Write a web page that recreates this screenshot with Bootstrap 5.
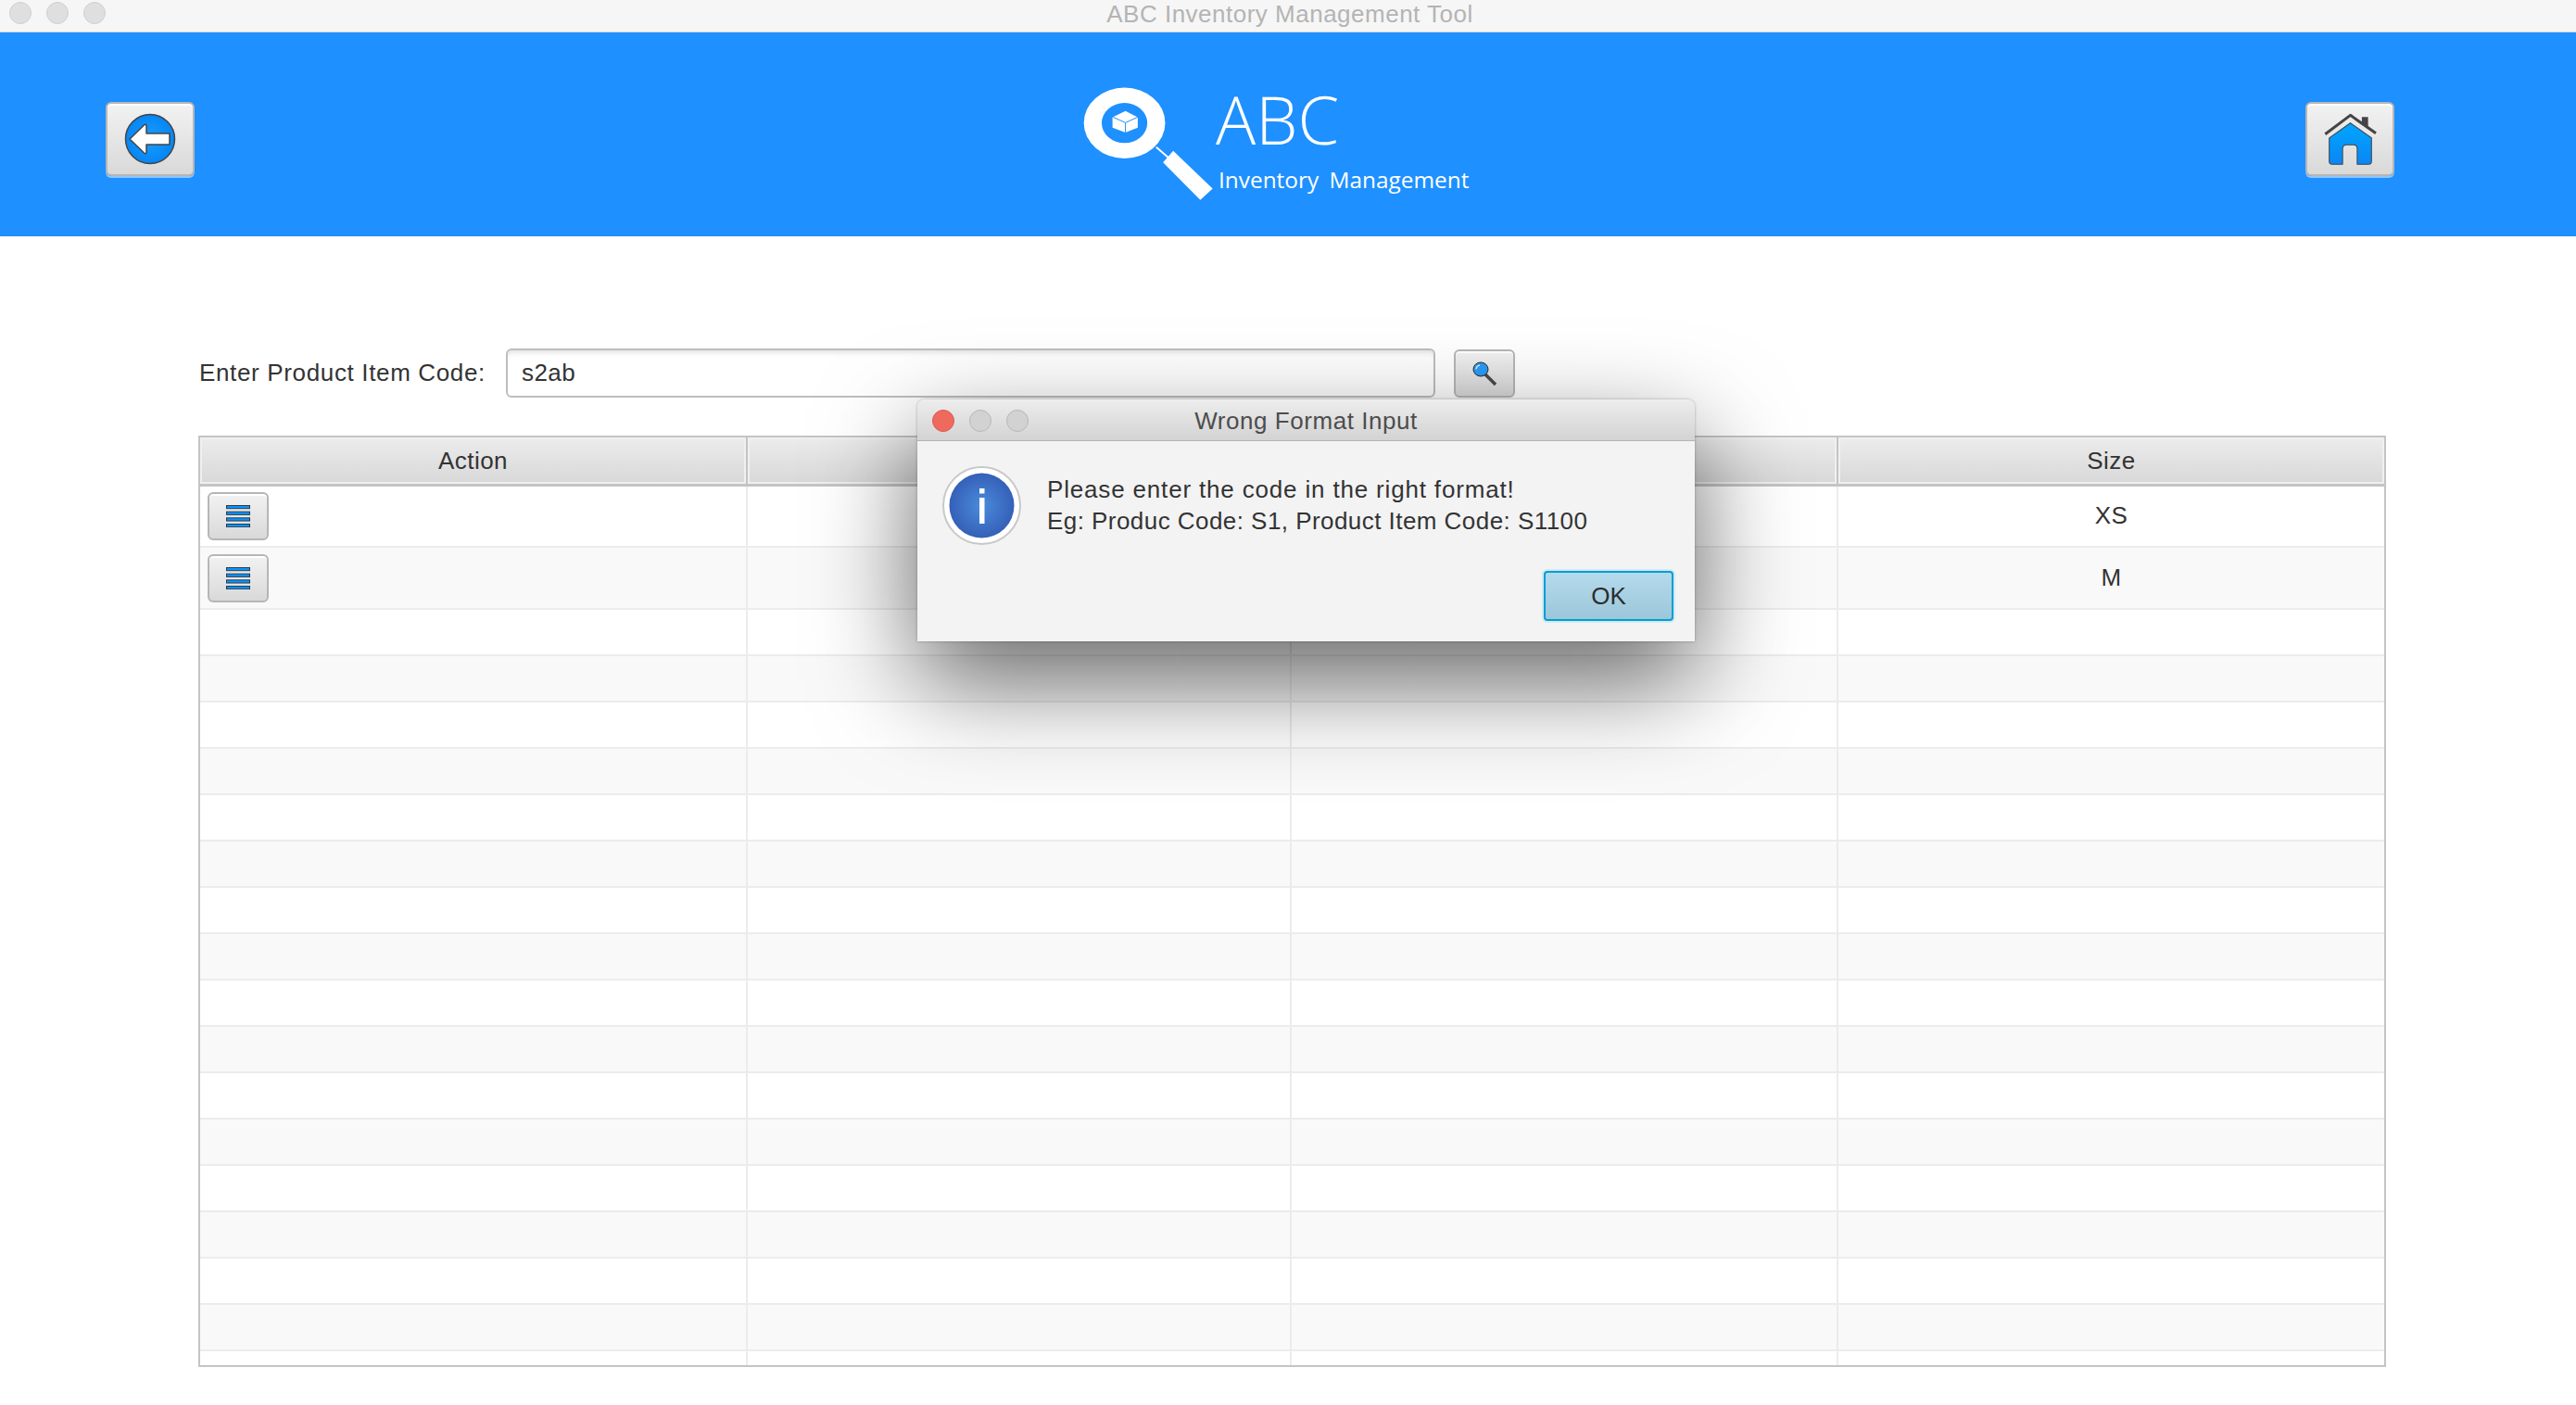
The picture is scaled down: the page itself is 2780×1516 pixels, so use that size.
<!DOCTYPE html>
<html lang="en">
<head>
  <meta charset="UTF-8">
  <title>ABC Inventory Management Tool</title>
  <link href="https://cdn.jsdelivr.net/npm/bootstrap@5.3.0/dist/css/bootstrap.min.css" rel="stylesheet">
  <style>
    body { font-family: "Liberation Sans", Arial, sans-serif; font-size: 26px; letter-spacing: .45px; color: #333; background: #fff; width: 2780px; height: 1516px; overflow: hidden; }
    .win-bar { height: 35px; background: #f6f6f6; border-bottom: 1px solid #d8d8d8; }
    .win-dots { left: 10px; top: 2px; gap: 16px; }
    .win-dot { width: 24px; height: 24px; border-radius: 50%; background: #dfdfdf; border: 1px solid #d0d0d0; }
    .win-title { font-size: 26px; line-height: 30px; letter-spacing: .5px; color: #b4b4b4; width: 100%; text-align: center; padding-left: 4px; }
    .app-head { height: 220px; background: #1e90ff; padding-left: 114px; padding-right: 196px; }
    .app-btn { display: flex; align-items: center; justify-content: center; padding: 0; border: 2px solid #b6b6b6; border-radius: 6px; background: linear-gradient(#f2f2f2, #d9d9d9); box-shadow: inset 0 2px 0 #fff; }
    .head-btn { width: 96px; height: 80px; margin-top: 75px; box-shadow: inset 0 2px 0 #fff, 0 2px 0 #8cc6ff; }
    .logo-box { margin-left: 958px; margin-top: 58px; }
    .logo-svg { width: 143px; height: 125px; display: block; }
    .logo-text { margin-left: 1px; color: #fff; font-family: "Open Sans", sans-serif; font-weight: 300; letter-spacing: 0; }
    .logo-abc { font-size: 72px; line-height: 71px; height: 78px; }
    .logo-sub { font-size: 24.4px; line-height: 30px; font-weight: 400; word-spacing: 5px; margin-left: 3px; margin-top: 8px; }
    .app-main { padding: 121px 0 0 214px; }
    .code-label { width: 332px; padding-left: 1px; margin: 0; letter-spacing: .65px; }
    .code-input.form-control { width: 1003px; height: 53px; border: 2px solid #bebebe; border-radius: 6px; padding: 0 15px; font-size: 26px; letter-spacing: .45px; color: #333; box-shadow: inset 0 6px 6px -4px #ddd; }
    .find-btn { width: 66px; height: 52px; margin-left: 20px; }
    .table-box { width: 2361px; height: 1005px; margin-top: 41px; border: 2px solid #c4c4c4; overflow: hidden; }
    .stock-table.table { table-layout: fixed; width: 2357px; margin: 0; --bs-table-bg: transparent; color: #333; }
    .stock-table.table > thead > tr > th { height: 51px; padding: 2px 0 0; font-weight: 400; text-align: center; vertical-align: middle; border-bottom: 3px solid #c4c4c4; border-right: 2px solid #c4c4c4; background: linear-gradient(#ececec, #d8d8d8); box-shadow: inset 0 0 0 2px #f0f0f0; }
    .stock-table.table > tbody > tr > td { height: 50px; padding: 0; text-align: center; vertical-align: middle; border-bottom: 2px solid #ececec; border-right: 2px solid #ececec; }
    .stock-table.table > tbody > tr.item-row > td { height: 67px; }
    .stock-table.table > tbody > tr:nth-child(even) > td { background: #f9f9f9; }
    .stock-table.table > thead > tr > th:last-child, .stock-table.table > tbody > tr > td:last-child { border-right: 0; }
    .col-a { width: 590px; }
    .col-b { width: 587px; }
    .col-c { width: 590px; }
    .menu-btn { width: 66px; height: 52px; margin-left: 8px; }
    .msg-box.card { position: absolute; left: 990px; top: 431px; width: 839px; height: 261px; border: 0; border-radius: 8px 8px 0 0; background: #f3f3f3; box-shadow: 0 42px 110px 0 rgba(0, 0, 0, .6), 0 0 3px rgba(0, 0, 0, .3); }
    .msg-head.card-header { position: relative; height: 45px; padding: 0; text-align: center; line-height: 47px; letter-spacing: .55px; color: #4d4d4d; background: linear-gradient(#ededed, #d3d3d3); border: 0; border-bottom: 1px solid #b4b4b4; border-radius: 8px 8px 0 0; }
    .msg-dots { left: 16px; top: 11px; gap: 16px; }
    .msg-dot { width: 24px; height: 24px; border-radius: 50%; background: #d2d2d2; border: 1px solid #b8b8b8; }
    .msg-dot-red { background: #ee6a5f; border-color: #dd5a50; }
    .msg-body.card-body { padding: 27px 23px 22px 27px; }
    .msg-icon { width: 85px; height: 85px; display: block; }
    .msg-text { margin-left: 28px; margin-top: 8px; line-height: 34px; }
    .msg-first { letter-spacing: .83px; }
    .ok-btn { width: 140px; height: 54px; font-size: 26px; letter-spacing: 0; color: #2b2b2b; border: 2px solid #039ed3; border-radius: 4px; background: linear-gradient(#b4dbec, #9cc6da); box-shadow: 0 0 0 2px #cfeaf5; padding: 0; }
  </style>
</head>
<body>
  <div class="win-bar position-relative">
    <div class="win-dots position-absolute d-flex">
      <div class="win-dot"></div><div class="win-dot"></div><div class="win-dot"></div>
    </div>
    <div class="win-title">ABC Inventory Management Tool</div>
  </div>

  <div class="app-head d-flex align-items-start">
    <button class="btn app-btn head-btn" type="button" aria-label="Back">
      <svg width="56" height="56" viewBox="0 0 56 56">
        <defs><radialGradient id="blueDisc"><stop offset="0" stop-color="#1a9dff"/><stop offset="1" stop-color="#0586f5"/></radialGradient></defs>
        <circle cx="28" cy="28" r="26.5" fill="url(#blueDisc)" stroke="#444" stroke-width="1.5"/>
        <path d="M6 28 22 12.5Q23.5 11.500 24 13.500V22H49V34H24V42.500Q23.500 44.500 22 43.500Z" fill="#fff" stroke="#444" stroke-width="1.5" stroke-linejoin="round"/>
      </svg>
    </button>
    <div class="logo-box d-flex">
      <svg class="logo-svg" viewBox="145 98 430 375">
        <ellipse cx="282" cy="217" rx="132" ry="115" fill="#fff"/>
        <ellipse cx="282" cy="217" rx="74" ry="65" fill="#1e90ff"/>
        <path d="M285 178 325 198V232L285 248 243 232V198Z" fill="#fff"/>
        <path d="M245 198 285 216 325 198M285 216V248" fill="none" stroke="#1e90ff" stroke-width="3"/>
        <path d="M385 295 425 330" stroke="#fff" stroke-width="6"/>
        <path d="M440 307 568 430 528 467 407 345Z" fill="#fff"/>
      </svg>
      <div class="logo-text">
        <div class="logo-abc">ABC</div>
        <div class="logo-sub">Inventory Management</div>
      </div>
    </div>
    <button class="btn app-btn head-btn ms-auto" type="button" aria-label="Home">
      <svg width="59" height="57" viewBox="200 125 176 170">
        <defs><linearGradient id="houseFill" x1="0" y1="0" x2="0" y2="1"><stop offset="0" stop-color="#00a6ff"/><stop offset="1" stop-color="#0a86f5"/></linearGradient></defs>
        <path d="M325 138H345V172L325 156Z" fill="#444"/>
        <path d="M207 193 288 132 370 190" fill="none" stroke="#444" stroke-width="9" stroke-linejoin="round"/>
        <path d="M220 205 288 157 356 205V280Q356 290 346 290H310V240Q310 227 298 227H276Q263 227 263 240V290H230Q220 290 220 280Z" fill="url(#houseFill)" stroke="#444" stroke-width="3"/>
      </svg>
    </button>
  </div>

  <div class="app-main">
    <form class="d-flex align-items-center">
      <label class="code-label" for="itemCode">Enter Product Item Code:</label>
      <input class="form-control code-input" id="itemCode" type="text" value="s2ab">
      <button class="btn app-btn find-btn" type="button" aria-label="Search">
        <svg width="28" height="28" viewBox="0 0 28 28">
          <path d="M14.500 14.500 26 26" stroke="#4a4a4a" stroke-width="3.500"/>
          <ellipse cx="10" cy="9.500" rx="8" ry="7.500" fill="#2a9bf8" stroke="#2b2b2b" stroke-width="1"/>
          <path d="M5 9.500a5 5 0 0 1 4-4.500" fill="none" stroke="#cfeaff" stroke-width="1.500"/>
        </svg>
      </button>
    </form>

    <div class="table-box">
      <table class="table stock-table" id="stockTable">
        <thead>
          <tr><th class="col-a">Action</th><th class="col-b"></th><th class="col-c"></th><th>Size</th></tr>
        </thead>
        <tbody></tbody>
      </table>
    </div>
  </div>

  <div class="card msg-box">
    <div class="card-header msg-head">
      <div class="msg-dots position-absolute d-flex">
        <div class="msg-dot msg-dot-red"></div><div class="msg-dot"></div><div class="msg-dot"></div>
      </div>
      Wrong Format Input
    </div>
    <div class="card-body msg-body d-flex flex-column">
      <div class="d-flex">
        <svg class="msg-icon" viewBox="0 0 85 85">
          <defs><radialGradient id="infoDisc"><stop offset="0" stop-color="#4a8bdc"/><stop offset="1" stop-color="#3560b8"/></radialGradient></defs>
          <circle cx="42.500" cy="42.500" r="41.500" fill="#fff" stroke="#c8c8c8" stroke-width="2"/>
          <circle cx="42.500" cy="42.500" r="35" fill="url(#infoDisc)"/>
          <rect x="40" y="24" width="5.500" height="5.500" fill="#fff"/>
          <rect x="40" y="34" width="5.500" height="28" fill="#fff"/>
        </svg>
        <div class="msg-text"><span class="msg-first">Please enter the code in the right format!</span><br>Eg: Produc Code: S1, Product Item Code: S1100</div>
      </div>
      <div class="mt-auto d-flex justify-content-end">
        <button class="btn ok-btn" type="button">OK</button>
      </div>
    </div>
  </div>

  <script>
    // two real rows, the rest of the table is empty
    const rows = [{ size: "XS" }, { size: "M" }];
    const tbody = document.querySelector("#stockTable tbody");
    const menuIcon = '<svg width="26" height="24" viewBox="0 0 26 24">' +
      [0, 6.67, 13.33, 20].map(y => '<rect x=".5" y="' + (y + .5) + '" width="25" height="3.2" fill="#0a94ff" stroke="#2b3a4a"/>').join("") +
      '</svg>';
    rows.forEach(r => {
      tbody.insertAdjacentHTML("beforeend",
        '<tr class="item-row"><td><button class="btn app-btn menu-btn" type="button" aria-label="Details">' + menuIcon + '</button></td><td></td><td></td><td>' + r.size + '</td></tr>');
    });
    for (let i = 0; i < 17; i++) {
      tbody.insertAdjacentHTML("beforeend", "<tr><td></td><td></td><td></td><td></td></tr>");
    }
  </script>
  <script src="https://cdn.jsdelivr.net/npm/bootstrap@5.3.0/dist/js/bootstrap.bundle.min.js"></script>
</body>
</html>
